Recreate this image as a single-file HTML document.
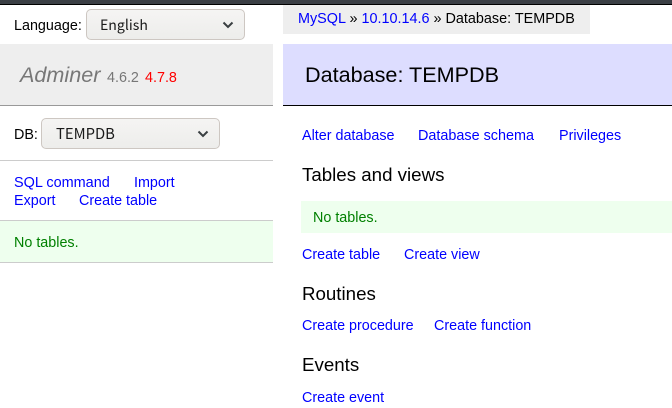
<!DOCTYPE html>
<html><head><meta charset="utf-8">
<style>
html,body{margin:0;padding:0;background:#fff;}
body{width:672px;height:408px;overflow:hidden;position:relative;font-family:"Liberation Sans",sans-serif;font-size:14.35px;color:#000;}
.a{position:absolute;white-space:nowrap;line-height:18px;}
.b{position:absolute;}
a{color:#00f;text-decoration:none;}
.sel{position:absolute;box-sizing:border-box;border:1px solid #cdc7c2;border-radius:5px;background:linear-gradient(#f5f4f3,#ededeb);height:31px;}
.sel span{position:absolute;top:6px;line-height:18px;font-family:"Noto Sans CJK JP",sans-serif;font-size:14.6px;color:#1a1a1a;}
.sel svg{position:absolute;top:11px;}
h1,h2{margin:0;font-weight:normal;}
</style></head>
<body>
<div class="b" style="left:0;top:0;width:672px;height:4px;background:#3b3f45"></div>
<div class="b" style="left:0;top:4px;width:672px;height:1px;background:#000"></div>

<div class="a" style="left:14px;top:17px">Language:</div>
<div class="sel" style="left:86px;top:9px;width:159px"><span style="left:13px;font-size:14.1px">English</span>
<svg style="left:135px" width="12" height="8" viewBox="0 0 12 8"><path d="M1.5 1.5L6 6L10.5 1.5" fill="none" stroke="#3a3f42" stroke-width="2"/></svg></div>

<div class="b" style="left:0;top:44px;width:273px;height:61px;background:#eee"></div>
<div class="b" style="left:0;top:105px;width:273px;height:1px;background:#999"></div>
<div class="a" style="left:20px;top:61px;font-size:21.6px;line-height:28px;font-style:italic;color:#777">Adminer</div>
<div class="a" style="left:107px;top:69px;color:#777">4.6.2</div>
<div class="a" style="left:145px;top:69px;color:#f00">4.7.8</div>

<div class="a" style="left:14px;top:126px">DB:</div>
<div class="sel" style="left:41px;top:118px;width:179px"><span style="left:14px;font-size:14.8px">TEMPDB</span>
<svg style="left:155px" width="12" height="8" viewBox="0 0 12 8"><path d="M1.5 1.5L6 6L10.5 1.5" fill="none" stroke="#3a3f42" stroke-width="2"/></svg></div>

<div class="b" style="left:0;top:160px;width:273px;height:1px;background:#ccc"></div>
<div class="a" style="left:14px;top:174px;font-size:14.45px"><a>SQL command</a></div>
<div class="a" style="left:134px;top:174px"><a>Import</a></div>
<div class="a" style="left:14px;top:192px"><a>Export</a></div>
<div class="a" style="left:79px;top:192px"><a>Create table</a></div>

<div class="b" style="left:0;top:220px;width:273px;height:43px;box-sizing:border-box;background:#efe;border-top:1px solid #ccc;border-bottom:1px solid #ccc"></div>
<div class="a" style="left:14px;top:234px;color:#008000">No tables.</div>

<div class="b" style="left:283px;top:5px;width:307px;height:29px;background:#eee"></div>
<div class="a" style="left:298px;top:10px;font-size:14.4px"><a>MySQL</a> » <a>10.10.14.6</a> » Database: TEMPDB</div>

<div class="b" style="left:283px;top:44px;width:389px;height:61px;background:#ddf"></div>
<div class="b" style="left:283px;top:105px;width:389px;height:1px;background:#000"></div>
<h1 class="a" style="left:305px;top:61px;font-size:21.6px;line-height:28px">Database: TEMPDB</h1>

<div class="a" style="left:302px;top:127px"><a>Alter database</a></div>
<div class="a" style="left:418px;top:127px;font-size:14.4px"><a>Database schema</a></div>
<div class="a" style="left:559px;top:127px"><a>Privileges</a></div>

<h2 class="a" style="left:302px;top:163px;font-size:18.72px;line-height:24px">Tables and views</h2>
<div class="b" style="left:301px;top:201px;width:371px;height:32px;background:#efe"></div>
<div class="a" style="left:313px;top:209px;color:#008000">No tables.</div>
<div class="a" style="left:302px;top:246px"><a>Create table</a></div>
<div class="a" style="left:404px;top:246px"><a>Create view</a></div>

<h2 class="a" style="left:302px;top:282px;font-size:18.72px;line-height:24px">Routines</h2>
<div class="a" style="left:302px;top:317px"><a>Create procedure</a></div>
<div class="a" style="left:434px;top:317px"><a>Create function</a></div>

<h2 class="a" style="left:302px;top:353px;font-size:18.72px;line-height:24px">Events</h2>
<div class="a" style="left:302px;top:389px"><a>Create event</a></div>
</body></html>
